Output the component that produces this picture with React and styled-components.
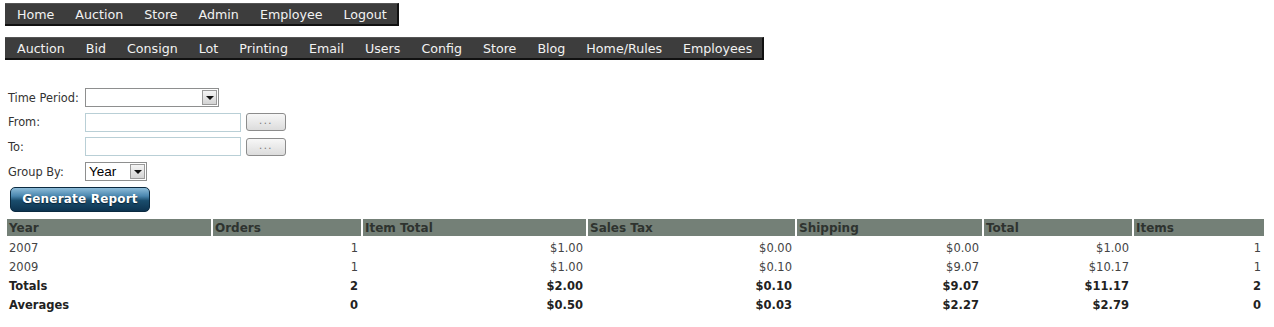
import React from "react";
import styled, { createGlobalStyle } from "styled-components";

const GlobalStyle = createGlobalStyle`
  html, body {
    margin: 0;
    padding: 0;
    background: #ffffff;
  }
  body {
    font-family: "DejaVu Sans", Verdana, sans-serif;
    color: #333333;
  }
`;

const mainLinks = ["Home", "Auction", "Store", "Admin", "Employee", "Logout"];
const adminLinks = [
  "Auction",
  "Bid",
  "Consign",
  "Lot",
  "Printing",
  "Email",
  "Users",
  "Config",
  "Store",
  "Blog",
  "Home/Rules",
  "Employees",
];

const columns = [
  { name: "Year", width: 204, align: "left" },
  { name: "Orders", width: 148 },
  { name: "Item Total", width: 223 },
  { name: "Sales Tax", width: 207 },
  { name: "Shipping", width: 185 },
  { name: "Total", width: 148 },
  { name: "Items", width: 130 },
];

const rows = [
  { cells: ["2007", "1", "$1.00", "$0.00", "$0.00", "$1.00", "1"] },
  { cells: ["2009", "1", "$1.00", "$0.10", "$9.07", "$10.17", "1"] },
  { cells: ["Totals", "2", "$2.00", "$0.10", "$9.07", "$11.17", "2"], bold: true },
  { cells: ["Averages", "0", "$0.50", "$0.03", "$2.27", "$2.79", "0"], bold: true },
];

const Page = styled.div`
  padding: 3px 0 0 5px;
`;

const NavBar = styled.ul`
  display: inline-flex;
  margin: 0 0 ${(p) => p.$gap || 0}px;
  padding: 0 0 0 1px;
  list-style: none;
  background: #3d3d3d;
  border-top: 1px solid #555;
  border-right: 2px solid #111;
  border-bottom: 2px solid #111;
  height: 20px;
  align-items: center;
`;

const NavItem = styled.li`
  padding: 0 10px 0 11px;
  font-size: 12.65px;
  color: #f2f2f2;
  white-space: nowrap;
`;

const NavRow = styled.div`
  display: block;
`;

const Form = styled.div`
  display: grid;
  grid-template-columns: 77px auto;
  row-gap: 5.7px;
  align-items: center;
  margin: 28px 0 0 3px;
  width: max-content;
`;

const Label = styled.label`
  font-size: 11.4px;
  color: #333;
`;

const Field = styled.div`
  display: flex;
  align-items: center;
  gap: 5px;
`;

const SelectBox = styled.div`
  display: flex;
  align-items: center;
  justify-content: space-between;
  box-sizing: border-box;
  width: ${(p) => p.$width}px;
  height: 19px;
  border: 1px solid #8e8f8f;
  background: #fff;
  padding: 0 1px 0 3px;
  font-family: "Liberation Sans", Arial, sans-serif;
  font-size: 13.5px;
  color: #000;
`;

const Arrow = styled.span`
  display: flex;
  align-items: center;
  justify-content: center;
  width: 15px;
  height: 15px;
  box-sizing: border-box;
  border: 1px solid #9a9a9a;
  background: linear-gradient(#f4f4f4, #d4d4d4);
  &::after {
    content: "";
    border-left: 4px solid transparent;
    border-right: 4px solid transparent;
    border-top: 4px solid #111;
    margin-top: 1px;
  }
`;

const TextInput = styled.div`
  box-sizing: border-box;
  width: 156px;
  height: 19px;
  border: 1px solid #b9cfd6;
  background: #fff;
`;

const DotButton = styled.button`
  box-sizing: border-box;
  width: 40px;
  height: 18px;
  padding: 0 0 3px;
  border: 1px solid #8c8c8c;
  border-radius: 3px;
  background: linear-gradient(#f7f7f7, #dcdcdc);
  font-family: "DejaVu Sans", Verdana, sans-serif;
  font-size: 10px;
  letter-spacing: 1.5px;
  color: #777;
`;

const ReportButton = styled.button`
  display: block;
  margin: 6px 0 0 5px;
  width: 140px;
  height: 25px;
  padding: 0 0 1px;
  border: 1px solid #0b2a40;
  border-radius: 5px;
  background: linear-gradient(
    to bottom,
    #8dbcd9 0%,
    #4a86ae 35%,
    #1a4d6d 55%,
    #0d3350 100%
  );
  color: #fff;
  font-family: "DejaVu Sans", Verdana, sans-serif;
  font-weight: bold;
  font-size: 12px;
  letter-spacing: 0.2px;
  text-shadow: 0 1px 1px #0a2235;
`;

const Table = styled.table`
  margin: 7px 0 0 0;
  border-collapse: separate;
  border-spacing: 2px 0;
  table-layout: fixed;
  font-size: 11.5px;

  tbody tr:first-child td {
    padding-top: 2px;
  }
`;

const HeadCell = styled.th`
  height: 17px;
  padding: 0 2px;
  background: #748077;
  color: #2e332f;
  font-size: 12px;
  font-weight: bold;
  text-align: left;
  vertical-align: middle;
`;

const Cell = styled.td`
  height: 19px;
  padding: 0 3px 0 2px;
  text-align: ${(p) => p.$align || "right"};
  font-weight: ${(p) => (p.$bold ? "bold" : "normal")};
  color: ${(p) => (p.$bold ? "#222" : "#444")};
  vertical-align: middle;
`;

export default function App() {
  return (
    <>
      <GlobalStyle />
      <Page>
        <NavRow>
          <NavBar $gap={11}>
            {mainLinks.map((l) => (
              <NavItem key={l}>{l}</NavItem>
            ))}
          </NavBar>
        </NavRow>
        <NavRow>
          <NavBar>
            {adminLinks.map((l) => (
              <NavItem key={l}>{l}</NavItem>
            ))}
          </NavBar>
        </NavRow>

        <Form>
          <Label>Time Period:</Label>
          <Field>
            <SelectBox $width={134}>
              <span />
              <Arrow />
            </SelectBox>
          </Field>
          <Label>From:</Label>
          <Field>
            <TextInput />
            <DotButton>...</DotButton>
          </Field>
          <Label>To:</Label>
          <Field>
            <TextInput />
            <DotButton>...</DotButton>
          </Field>
          <Label>Group By:</Label>
          <Field>
            <SelectBox $width={62}>
              <span>Year</span>
              <Arrow />
            </SelectBox>
          </Field>
        </Form>

        <ReportButton>Generate Report</ReportButton>

        <Table>
          <colgroup>
            {columns.map((c) => (
              <col key={c.name} style={{ width: c.width }} />
            ))}
          </colgroup>
          <thead>
            <tr>
              {columns.map((c) => (
                <HeadCell key={c.name}>{c.name}</HeadCell>
              ))}
            </tr>
          </thead>
          <tbody>
            {rows.map((r) => (
              <tr key={r.cells[0]}>
                {r.cells.map((v, i) => (
                  <Cell
                    key={i}
                    $bold={r.bold}
                    $align={columns[i].align}
                  >
                    {v}
                  </Cell>
                ))}
              </tr>
            ))}
          </tbody>
        </Table>
      </Page>
    </>
  );
}
